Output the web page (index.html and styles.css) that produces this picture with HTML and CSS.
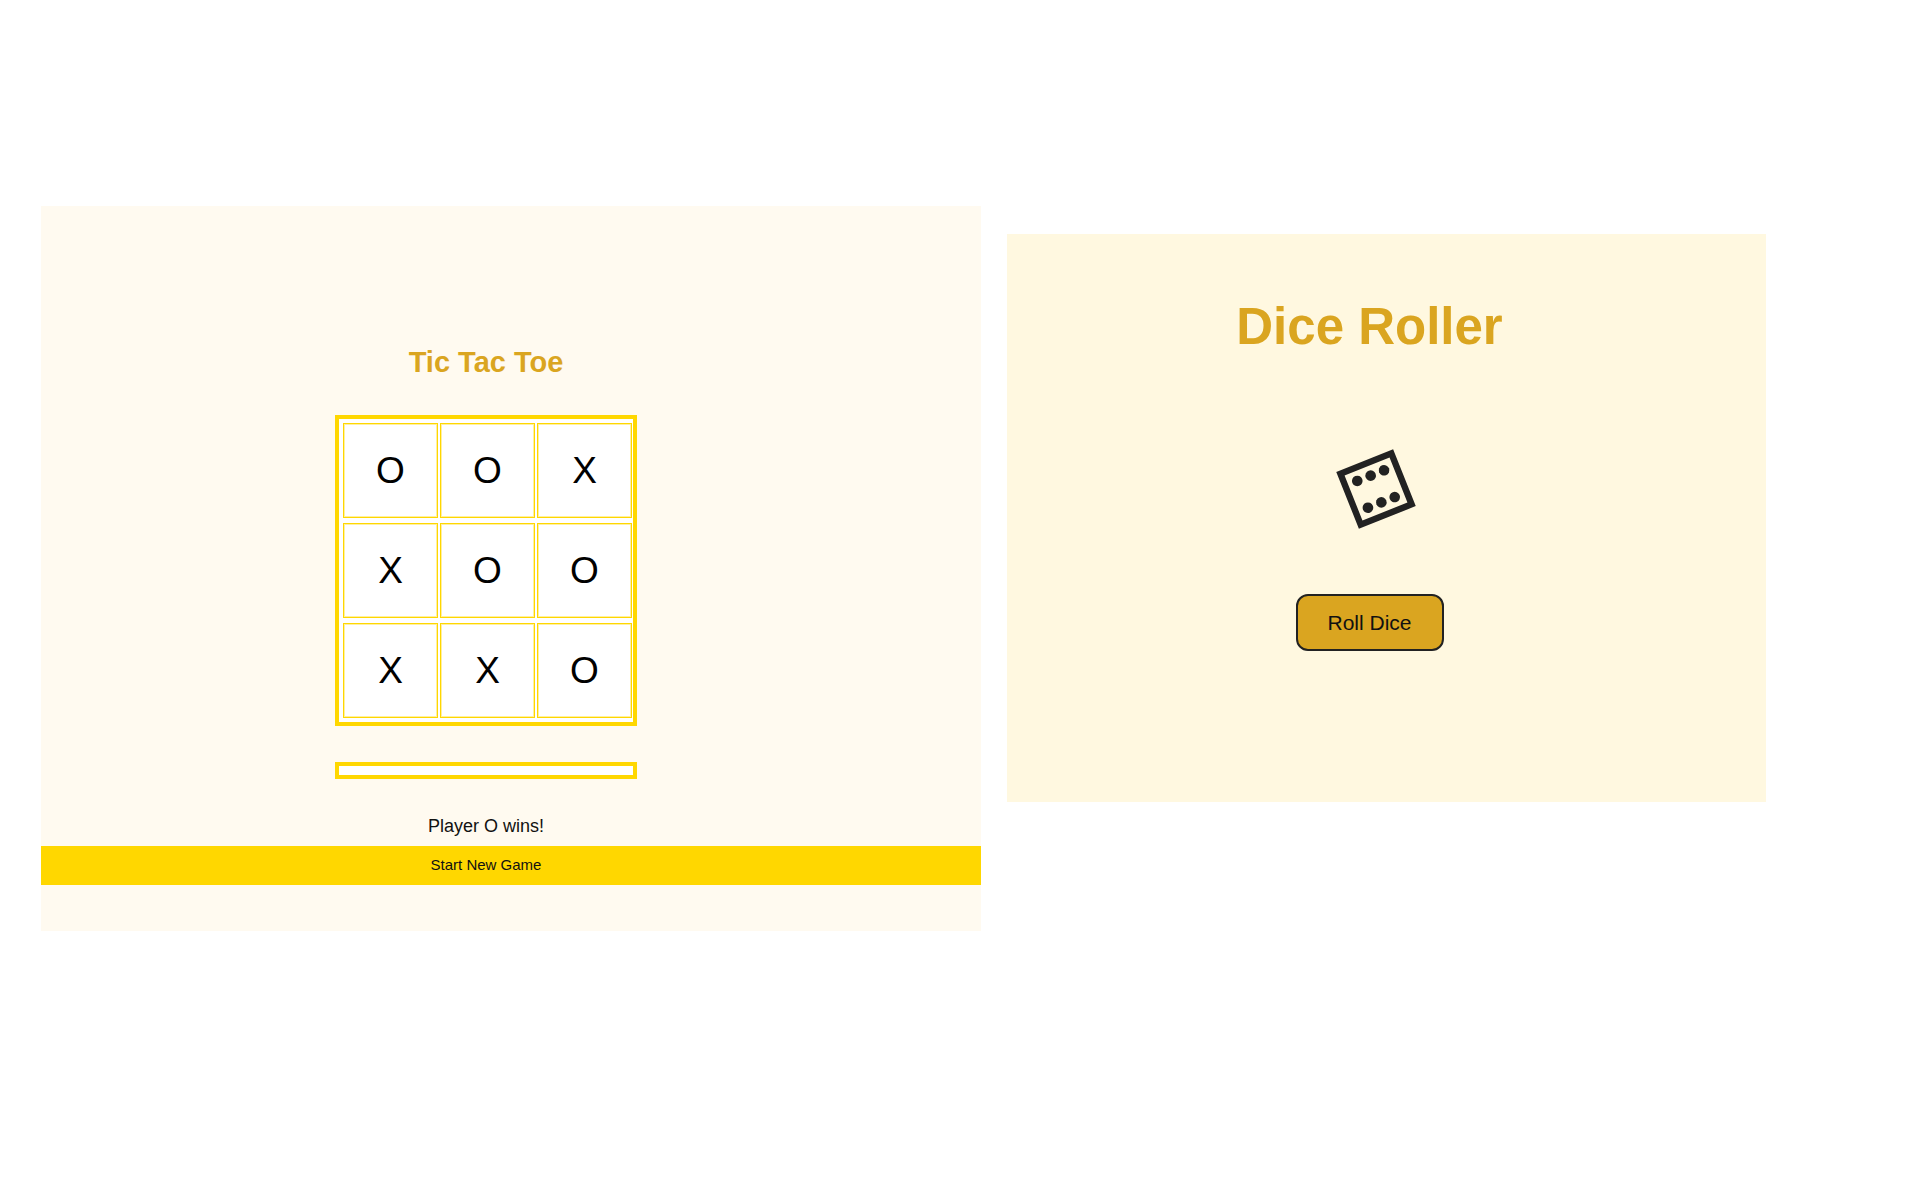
FILE: index.html
```html
<!doctype html>
<html lang="en">
  <head>
    <meta charset="UTF-8" />
    <meta name="viewport" content="width=device-width, initial-scale=1.0" />
    <title>Mini Games</title>
    <link rel="stylesheet" href="styles.css">
  </head>
  <body>
    <main class="games">
      <section class="tic-tac-toe">
        <h2>Tic Tac Toe</h2>
        <div class="board">
          <button class="cell">O</button>
          <button class="cell">O</button>
          <button class="cell">X</button>
          <button class="cell">X</button>
          <button class="cell">O</button>
          <button class="cell">O</button>
          <button class="cell">X</button>
          <button class="cell">X</button>
          <button class="cell">O</button>
        </div>
        <div class="board-footer"></div>
        <p class="status">Player O wins!</p>
        <button class="new-game">Start New Game</button>
      </section>

      <section class="dice-roller">
        <h1>Dice Roller</h1>
        <svg class="dice" viewBox="0 0 112 100" role="img" aria-label="Six">
          <g transform="translate(62 50) rotate(-21.7)">
            <rect x="-27.4" y="-27.4" width="54.8" height="54.8" fill="none" stroke="#222" stroke-width="6.4" />
            <g fill="#222">
              <circle cx="-14.4" cy="-14.4" r="5.3" />
              <circle cx="0" cy="-14.4" r="5.3" />
              <circle cx="14.4" cy="-14.4" r="5.3" />
              <circle cx="-14.4" cy="14.4" r="5.3" />
              <circle cx="0" cy="14.4" r="5.3" />
              <circle cx="14.4" cy="14.4" r="5.3" />
            </g>
          </g>
        </svg>
        <button class="roll">Roll Dice</button>
      </section>
    </main>
  </body>
</html>
```
FILE: styles.css
```css
:root {
  --gold: #ffd700;
  --goldenrod: #daa520;
}

* {
  box-sizing: border-box;
  margin: 0;
  padding: 0;
}

body {
  font-family: "Liberation Sans", Arial, sans-serif;
  background-color: #fff;
  color: #111;
}

button {
  font-family: inherit;
  color: inherit;
  cursor: pointer;
}

.games {
  display: grid;
  grid-template-columns: 940fr 759fr;
  gap: 26px;
  align-items: start;
  padding: 206px 154px 40px 41px;
}

.tic-tac-toe,
.dice-roller {
  display: flex;
  flex-direction: column;
  align-items: center;
}

/* Tic Tac Toe */
.tic-tac-toe {
  padding: 139px 0 46px;
  background-color: #fffaf0;
}

.tic-tac-toe > * {
  margin-right: 50px;
}

.tic-tac-toe h2 {
  font-size: 29px;
  line-height: 34px;
  color: var(--goldenrod);
}

.board {
  display: grid;
  grid-template-columns: repeat(3, 95px);
  grid-auto-rows: 95px;
  gap: 5px 2px;
  margin-top: 36px;
  padding: 4px 1px 4px 4px;
  border: 4px solid var(--gold);
  background-color: #fff;
}

.cell {
  border: 1px solid var(--gold);
  background-color: #fff;
  box-shadow: inset 0 0 0 1px #fff0a0;
  color: #000;
  font-size: 37px;
}

.board-footer {
  width: 302px;
  height: 17px;
  margin-top: 36px;
  border: 4px solid var(--gold);
  background-color: #fff;
}

.status {
  margin-top: 35px;
  font-size: 18px;
  line-height: 24px;
}

.new-game {
  align-self: stretch;
  height: 39px;
  margin-top: 8px;
  margin-right: 0;
  padding: 0 50px 2px 0;
  border: none;
  background-color: var(--gold);
  font-size: 15px;
}

/* Dice Roller */
.dice-roller {
  margin-top: 28px;
  padding: 63px 34px 151px 0;
  background-color: #fff8e0;
}

.dice-roller h1 {
  font-size: 51px;
  line-height: 60px;
  color: var(--goldenrod);
}

.dice {
  width: 112px;
  height: 100px;
  margin-top: 82px;
}

.roll {
  width: 148px;
  height: 57px;
  margin-top: 55px;
  border: 2px solid #222;
  border-radius: 12px;
  background-color: var(--goldenrod);
  font-size: 21px;
}
```
